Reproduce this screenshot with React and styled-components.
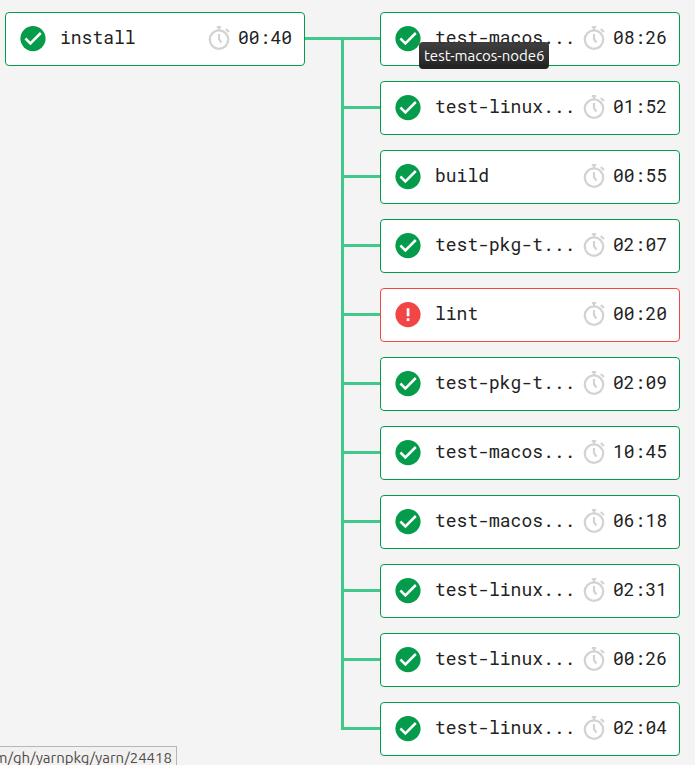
import React from "react";
import styled, { createGlobalStyle } from "styled-components";

const GREEN = "#049b4a";
const RED = "#f24646";
const LINE = "#42c88a";

const GlobalStyle = createGlobalStyle`
  * { box-sizing: border-box; }
  body { margin: 0; background: #f4f4f4; overflow: hidden; }
`;

const Workflow = styled.main`
  display: flex;
  align-items: flex-start;
  padding: 12px 15px 9px 5px;
`;

const Stage = styled.section`
  flex: 1 1 0;
  min-width: 0;
`;

const Link = styled.div`
  flex: 0 0 36px;
  height: 3px;
  margin-top: 25px;
  background: ${LINE};
`;

const Branches = styled.ul`
  flex: 1 1 39px;
  min-width: 0;
  margin: 0;
  padding: 0;
  list-style: none;
`;

const Branch = styled.li`
  display: flex;
`;

const Connector = styled.div`
  flex: 0 0 39px;
  display: flex;
  flex-direction: column;
`;

const Upper = styled.div`
  height: 25px;
  border-left: 3px solid ${(p) => (p.$first ? "transparent" : LINE)};
`;

const Lower = styled.div`
  flex: 1;
  border-left: ${(p) => (p.$last ? "0" : `3px solid ${LINE}`)};

  &::before {
    content: "";
    display: block;
    height: 3px;
    background: ${LINE};
  }
`;

const Slot = styled.div`
  flex: 1;
  min-width: 0;
  padding-bottom: ${(p) => (p.$last ? 0 : 15)}px;
`;

const Card = styled.a`
  position: relative;
  display: flex;
  align-items: center;
  height: 54px;
  padding: 0 12px 0 14px;
  border: 1px solid ${(p) => (p.$failed ? RED : GREEN)};
  border-radius: 4px;
  background: #fff;
  color: #222;
  font: 18px/24px "Roboto Mono", "Liberation Mono", monospace;
  text-decoration: none;
`;

const Name = styled.span`
  flex: 1;
  min-width: 0;
  margin-left: 14px;
  padding-bottom: 4px;
  overflow: hidden;
  white-space: nowrap;
`;

const Time = styled.time`
  margin-left: 8px;
  padding-bottom: 4px;
`;

const Glyph = styled.svg`
  display: block;
  flex: none;
`;

const Tooltip = styled.span`
  position: absolute;
  z-index: 2;
  top: 29px;
  left: 38px;
  padding: 0 4px 0 5px;
  border-radius: 4px;
  background: linear-gradient(rgba(56, 56, 56, 0.96), rgba(26, 26, 26, 0.96));
  color: #fff;
  font: 15px/27px "Ubuntu", "Noto Sans", sans-serif;
  white-space: nowrap;
`;

const StatusBar = styled.footer`
  position: fixed;
  bottom: 0;
  left: 0;
  display: flex;
  justify-content: flex-end;
  width: 177px;
  height: 19px;
  padding-right: 4px;
  overflow: hidden;
  border: 1px solid #b9b6b1;
  border-width: 1px 1px 0 0;
  background: #f2f1f0;
  color: #4c4c4c;
  font: 15px/22px "Ubuntu", "Noto Sans", sans-serif;
  white-space: nowrap;
`;

function StatusIcon({ failed }) {
  return (
    <Glyph width="26" height="26" viewBox="0 0 26 26" role="img" aria-label={failed ? "Failed" : "Passed"}>
      <circle cx="13" cy="12.6" r="12.6" fill={failed ? RED : GREEN} />
      {failed ? (
        <path d="M11.7 6.2h2.7v8h-2.7zM11.7 16.3h2.7v2.8h-2.7z" fill="#fff" />
      ) : (
        <path d="M5.4 12.5l5 5L20.8 7" fill="none" stroke="#fff" strokeWidth="2.5" />
      )}
    </Glyph>
  );
}

function Stopwatch() {
  return (
    <Glyph width="22" height="26" viewBox="0 0 22 26" aria-hidden="true">
      <g fill="none" stroke="#d3d3d3">
        <circle cx="11" cy="13.6" r="9.2" strokeWidth="2.3" />
        <path d="M8.8 1h4.4" strokeWidth="2" />
        <path d="M11 2v2.5" strokeWidth="2.4" />
        <path d="M17.8 3l3.2 3" strokeWidth="2.2" />
        <path d="M11 8v5.2l2.4 3.4" strokeWidth="2.2" />
      </g>
    </Glyph>
  );
}

function Job({ name, time, failed, tooltip }) {
  return (
    <Card href="#" $failed={failed}>
      <StatusIcon failed={failed} />
      <Name>{name}</Name>
      <Stopwatch />
      <Time>{time}</Time>
      {tooltip && <Tooltip role="tooltip">{tooltip}</Tooltip>}
    </Card>
  );
}

const jobs = [
  { name: "test-macos...", time: "08:26", tooltip: "test-macos-node6" },
  { name: "test-linux...", time: "01:52" },
  { name: "build", time: "00:55" },
  { name: "test-pkg-t...", time: "02:07" },
  { name: "lint", time: "00:20", failed: true },
  { name: "test-pkg-t...", time: "02:09" },
  { name: "test-macos...", time: "10:45" },
  { name: "test-macos...", time: "06:18" },
  { name: "test-linux...", time: "02:31" },
  { name: "test-linux...", time: "00:26" },
  { name: "test-linux...", time: "02:04" },
];

export default function App() {
  return (
    <>
      <GlobalStyle />
      <Workflow>
        <Stage>
          <Job name="install" time="00:40" />
        </Stage>
        <Link />
        <Branches>
          {jobs.map((job, i) => {
            const last = i === jobs.length - 1;
            return (
              <Branch key={i}>
                <Connector>
                  <Upper $first={i === 0} />
                  <Lower $last={last} />
                </Connector>
                <Slot $last={last}>
                  <Job {...job} />
                </Slot>
              </Branch>
            );
          })}
        </Branches>
      </Workflow>
      <StatusBar>m/gh/yarnpkg/yarn/24418</StatusBar>
    </>
  );
}
